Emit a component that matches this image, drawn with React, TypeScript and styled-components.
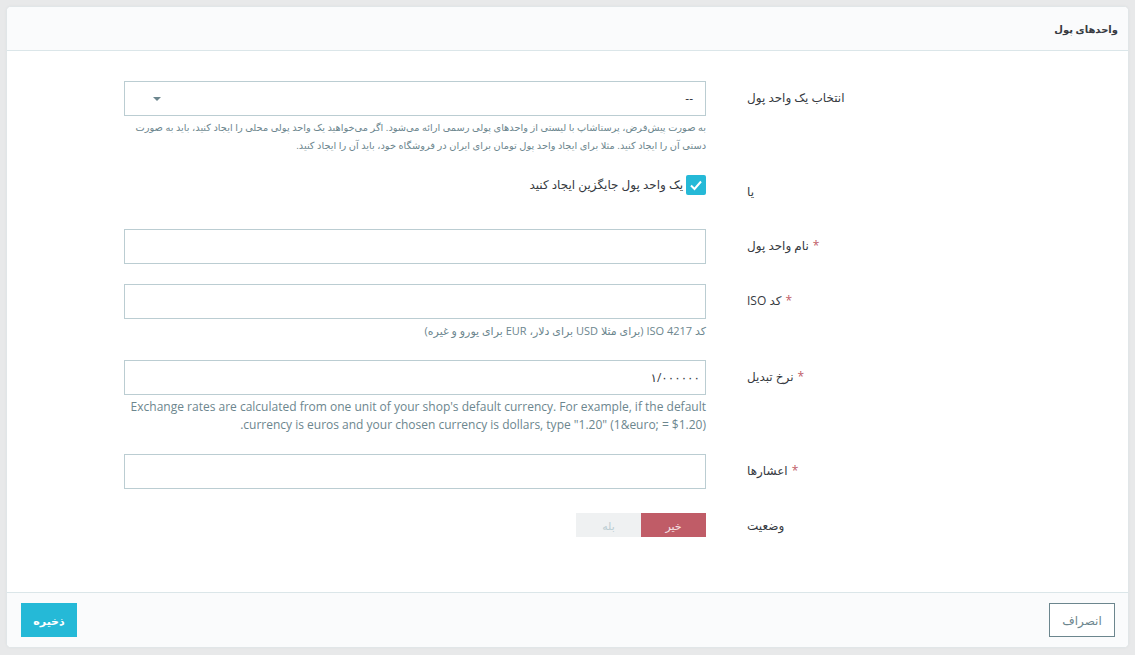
import React from 'react';
import styled, { createGlobalStyle } from 'styled-components';

const Global = createGlobalStyle`
  html, body { margin: 0; padding: 0; background: #e8e9ea; }
  body { font-family: "Open Sans", "DejaVu Sans", sans-serif; color: #363a41; }
  * { box-sizing: border-box; }
`;

const Page = styled.div`
  padding: 6px;
  direction: rtl;
`;

const Panel = styled.section`
  background: #fff;
  border: 1px solid #e1e6e8;
  border-radius: 5px;
  overflow: hidden;
  box-shadow: 0 0 3px rgba(0, 0, 0, 0.04);
`;

const Header = styled.header`
  height: 44px;
  background: #fafbfc;
  border-bottom: 1px solid #dbe6e9;
  display: flex;
  align-items: center;
  padding: 0 10px;
  font-size: 10px;
  font-weight: 700;
  color: #363a41;
`;

const Body = styled.div`
  padding: 30px 0 55px;
  display: flex;
  flex-direction: column;
  gap: 20px;
`;

const Row = styled.div`
  display: grid;
  grid-template-columns: 381px 582px 1fr;
  column-gap: 41px;
  align-items: start;
`;

const Label = styled.label`
  padding-top: 8px;
  line-height: 18px;
  font-size: 12px;
  text-align: left;
  color: #363a41;
`;

const Star = styled.span`
  color: #c05c67;
  margin-left: 4px;
`;

const Field = styled.div`
  display: flex;
  flex-direction: column;
`;

const Input = styled.div`
  height: 35px;
  border: 1px solid #bbcdd2;
  background: #fff;
  display: flex;
  align-items: center;
  padding: 0 5px;
  font-size: 12px;
  color: #363a41;
`;

const Select = styled.div`
  height: 35px;
  border: 1px solid #bbcdd2;
  background: #fff;
  display: flex;
  align-items: center;
  justify-content: space-between;
  padding: 0 12px 0 28px;
  font-size: 12px;
  color: #363a41;
`;

const Caret = styled.span`
  width: 0;
  height: 0;
  border-left: 4px solid transparent;
  border-right: 4px solid transparent;
  border-top: 4px solid #6c868e;
`;

const Help = styled.p<{ $size?: number }>`
  margin: 3px 0 0;
  font-size: ${(p) => p.$size ?? 11}px;
  line-height: 18px;
  color: #6c868e;
`;

const CheckField = styled.div`
  min-height: 34px;
  display: flex;
  align-items: flex-start;
  gap: 3px;
`;

const CheckBox = styled.span`
  width: 20px;
  height: 20px;
  border-radius: 2px;
  background: #25b9d7;
  display: flex;
  align-items: center;
  justify-content: center;
  flex-shrink: 0;
`;

const CheckText = styled.span`
  font-size: 12px;
  line-height: 20px;
  color: #363a41;
`;

const Toggle = styled.div`
  margin-top: 4px;
  width: 130px;
  height: 24px;
  display: flex;
`;

const ToggleItem = styled.span<{ $active?: boolean }>`
  flex: 1;
  display: flex;
  align-items: center;
  justify-content: center;
  font-size: 11px;
  background: ${(p) => (p.$active ? '#c05c67' : '#eff1f2')};
  color: ${(p) => (p.$active ? '#f6e3e5' : '#bbcdd2')};
`;

const Footer = styled.footer`
  border-top: 1px solid #dbe6e9;
  background: #fafbfc;
  padding: 10px 13px 10px 14px;
  display: flex;
  justify-content: space-between;
`;

const Button = styled.button<{ $primary?: boolean }>`
  height: 34px;
  width: ${(p) => (p.$primary ? '56px' : '66px')};
  font-family: inherit;
  font-size: ${(p) => (p.$primary ? '11px' : '12px')};
  font-weight: ${(p) => (p.$primary ? 700 : 400)};
  border: 1px solid ${(p) => (p.$primary ? '#25b9d7' : '#6c868e')};
  background: ${(p) => (p.$primary ? '#25b9d7' : '#fff')};
  color: ${(p) => (p.$primary ? '#fff' : '#6c868e')};
  padding: 0;
  cursor: pointer;
`;

const Required = ({ children }: { children: React.ReactNode }) => (
  <Label>
    <Star>*</Star>
    {children}
  </Label>
);

export default function App() {
  return (
    <>
      <Global />
      <Page>
        <Panel>
          <Header>واحدهای پول</Header>
          <Body>
            <Row>
              <Label>انتخاب یک واحد پول</Label>
              <Field>
                <Select>
                  <span>--</span>
                  <Caret />
                </Select>
                <Help $size={9.8}>
                  به صورت پیش‌فرض، پرستاشاپ با لیستی از واحدهای پولی رسمی ارائه می‌شود. اگر می‌خواهید یک واحد پولی محلی را ایجاد کنید، باید به صورت دستی آن را ایجاد کنید. مثلا برای ایجاد واحد پول تومان برای ایران در فروشگاه خود، باید آن را ایجاد کنید.
                </Help>
              </Field>
            </Row>
            <Row>
              <Label>یا</Label>
              <CheckField>
                <CheckBox>
                  <svg width="14" height="14" viewBox="0 0 14 14">
                    <polyline points="2,7.5 5.5,11 12,3.5" fill="none" stroke="#fff" strokeWidth="2" />
                  </svg>
                </CheckBox>
                <CheckText>یک واحد پول جایگزین ایجاد کنید</CheckText>
              </CheckField>
            </Row>
            <Row>
              <Required>نام واحد پول</Required>
              <Field>
                <Input />
              </Field>
            </Row>
            <Row>
              <Required>کد ISO</Required>
              <Field>
                <Input />
                <Help>کد ISO 4217 (برای مثلا USD برای دلار، EUR برای یورو و غیره)</Help>
              </Field>
            </Row>
            <Row>
              <Required>نرخ تبدیل</Required>
              <Field>
                <Input>۱/۰۰۰۰۰۰</Input>
                <Help $size={12}>
                  {'Exchange rates are calculated from one unit of your shop\'s default currency. For example, if the default currency is euros and your chosen currency is dollars, type "1.20" (1&euro; = $1.20).'}
                </Help>
              </Field>
            </Row>
            <Row>
              <Required>اعشارها</Required>
              <Field>
                <Input />
              </Field>
            </Row>
            <Row>
              <Label>وضعیت</Label>
              <Field>
                <Toggle>
                  <ToggleItem $active>خیر</ToggleItem>
                  <ToggleItem>بله</ToggleItem>
                </Toggle>
              </Field>
            </Row>
          </Body>
          <Footer>
            <Button>انصراف</Button>
            <Button $primary>ذخیره</Button>
          </Footer>
        </Panel>
      </Page>
    </>
  );
}
